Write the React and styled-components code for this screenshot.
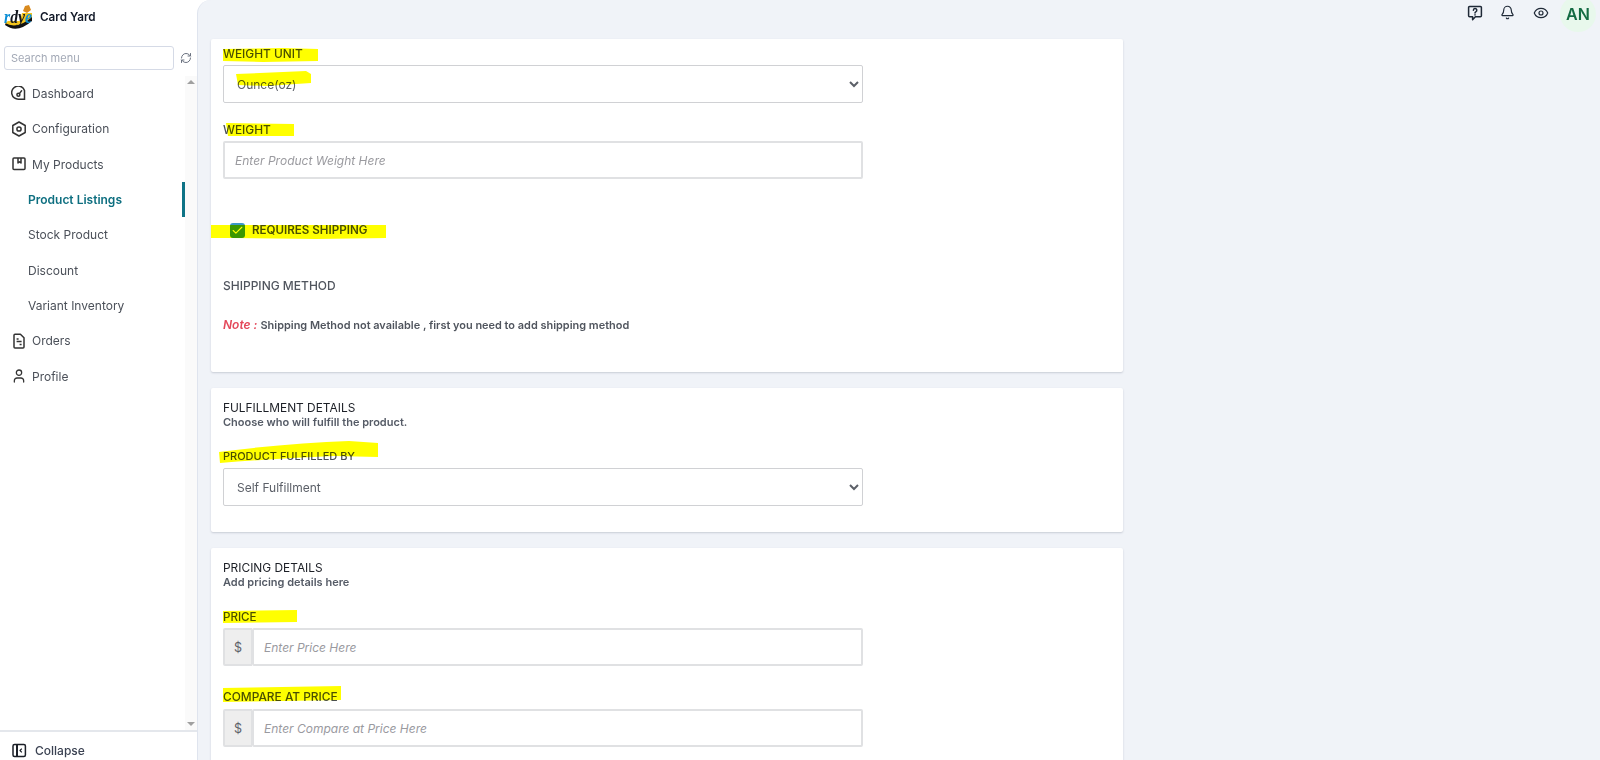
import React from 'react';
import styled, { createGlobalStyle } from 'styled-components';
import { RefreshCw, Check, Bell, Eye, User } from 'lucide-react';

const GlobalStyle = createGlobalStyle`
    html, body {
        margin: 0;
        height: 100%;
        overflow: hidden;
        background: #fff;
        font-family: Inter, "Liberation Sans", sans-serif;
    }
    * { box-sizing: border-box; }
`;

const Page = styled.div`
    display: flex;
    width: 1600px;
    height: 760px;
    overflow: hidden;
    background: #fff;
`;

const Sidebar = styled.aside`
    width: 197px;
    flex: none;
    display: flex;
    flex-direction: column;
    background: #fff;
`;

const Brand = styled.div`
    height: 34px;
    display: flex;
    align-items: center;
    gap: 7px;
    padding: 0 0 0 3px;
    font-size: 11.7px;
    font-weight: 600;
    color: #111827;
`;

const SearchRow = styled.div`
    display: flex;
    align-items: center;
    gap: 6px;
    padding: 12px 0 0 4px;
`;

const SearchInput = styled.input`
    width: 170px;
    height: 24px;
    border: 1px solid #d5dae6;
    border-radius: 3px;
    padding: 0 6px;
    font: 400 11px Inter, sans-serif;
    &::placeholder { color: #a3a9b6; opacity: 1; }
`;

const Refresh = styled(RefreshCw)`
    color: #6b7280;
`;

const MenuWrap = styled.div`
    flex: 1;
    min-height: 0;
    display: flex;
    margin-top: 6px;
`;

const Menu = styled.nav`
    flex: 1;
`;

const MenuRow = styled.div`
    position: relative;
    height: 35.3px;
    display: flex;
    align-items: center;
    gap: 5px;
    padding-left: ${p => (p.$sub ? '28px' : '11px')};
    font-size: 12px;
    font-weight: ${p => (p.$active ? 600 : 400)};
    color: ${p => (p.$active ? '#0e6f80' : '#4b5059')};
`;

const ActiveBar = styled.span`
    position: absolute;
    right: 0;
    top: 0;
    width: 3px;
    height: 100%;
    background: #0e7386;
`;

const ScrollTrack = styled.div`
    width: 12px;
    flex: none;
    display: flex;
    flex-direction: column;
    justify-content: space-between;
    align-items: center;
    padding: 4px 0;
    background: #fafafa;
`;

const Arrow = styled.span`
    width: 0;
    height: 0;
    border-left: 4px solid transparent;
    border-right: 4px solid transparent;
    border-${p => (p.$down ? 'top' : 'bottom')}: 4px solid #a0a0a0;
`;

const CollapseRow = styled.div`
    height: 30px;
    flex: none;
    border-top: 2px solid #e4e7ec;
    display: flex;
    align-items: center;
    gap: 8px;
    padding: 8px 0 0 12px;
    font-size: 12px;
    font-weight: 500;
    color: #3b4252;
`;

const Main = styled.main`
    flex: 1;
    min-width: 0;
    background: #f0f3f8;
    border-left: 1px solid #dfe4ee;
    border-top-left-radius: 14px;
    overflow: hidden;
`;

const TopBar = styled.header`
    height: 39px;
    position: relative;
    display: flex;
    justify-content: flex-end;
    align-items: flex-start;
    padding: 5px 4px 0 0;
    gap: 17px;
    color: #1f2937;
`;

const IconSlot = styled.span`
    display: flex;
    width: 16px;
    height: 16px;
    margin-right: ${p => p.$gap || 0}px;
`;

const Avatar = styled.div`
    position: absolute;
    right: 4px;
    top: -4px;
    width: 36px;
    height: 36px;
    border-radius: 50%;
    background: #e8f8ec;
    color: #146c43;
    font-size: 16px;
    font-weight: 600;
    display: flex;
    align-items: center;
    justify-content: center;
`;

const Content = styled.div`
    width: 912px;
    margin-left: 13px;
    display: flex;
    flex-direction: column;
    gap: 16px;
`;

const Card = styled.section`
    background: #fff;
    border-radius: 2px;
    box-shadow: 0 1px 2px rgba(60, 70, 90, 0.22);
    padding: ${p => p.$pad || '12px'} 12px ${p => p.$bottom || '26px'};
    min-height: ${p => p.$min || 0}px;
`;

const CardTitle = styled.div`
    font-size: 11.9px;
    line-height: 15px;
    color: #1c1f26;
`;

const CardSub = styled.div`
    font-size: 11px;
    line-height: 15px;
    font-weight: 600;
    color: #555b66;
`;

const Field = styled.div`
    position: relative;
    margin-top: ${p => p.$top || 0}px;
`;

const Label = styled.div`
    position: relative;
    font-size: ${p => p.$size || 11.6}px;
    line-height: 14px;
    font-weight: 500;
    color: #4a4f57;
    margin-bottom: ${p => p.$mb ?? 5}px;
`;

const fieldBox = `
    display: block;
    width: 640px;
    height: 38px;
    background: #fff;
    border: 2px solid #e0e1e3;
    border-radius: 2px;
    font-family: Inter, sans-serif;
    font-size: 12px;
    color: #5c6068;
    outline: none;
`;

const Select = styled.select`
    ${fieldBox}
    padding-left: 9px;
    border: 1.5px solid #d0d1d4;
`;

const TextInput = styled.input`
    ${fieldBox}
    padding-left: 10px;
    &::placeholder { color: #9a9a9f; font-style: italic; opacity: 1; }
`;

const InputGroup = styled.div`
    display: flex;
    width: 640px;
`;

const Addon = styled.span`
    width: 29px;
    height: 38px;
    flex: none;
    background: #eeeeee;
    border: 2px solid #e0e1e3;
    border-right-width: 1px;
    border-radius: 2px 0 0 2px;
    display: flex;
    align-items: center;
    justify-content: center;
    font-size: 12.5px;
    color: #5c6068;
`;

const GroupInput = styled(TextInput)`
    flex: 1;
    width: auto;
    min-width: 0;
`;

const CheckLine = styled.div`
    position: relative;
    display: flex;
    align-items: center;
    gap: 7px;
    margin-top: 43px;
    padding-left: 7px;
    height: 16px;
    font-size: 11.6px;
    font-weight: 600;
    color: #4a4f57;
`;

const CheckBox = styled.span`
    width: 15px;
    height: 15px;
    border-radius: 3px;
    background: #3c98c8;
    color: #fff;
    display: flex;
    align-items: center;
    justify-content: center;
`;

const SectionLabel = styled.div`
    margin-top: 40px;
    font-size: 12px;
    line-height: 16px;
    font-weight: 500;
    color: #50555e;
`;

const NoteLine = styled.div`
    margin-top: 23px;
    font-size: 10.95px;
    line-height: 16px;
    font-weight: 600;
    color: #50555e;
`;

const NoteTag = styled.em`
    font-size: 12px;
    font-weight: 600;
    color: #e4485a;
`;

const Marker = styled.svg`
    position: absolute;
    left: ${p => p.$x}px;
    top: ${p => p.$y}px;
    overflow: visible;
    pointer-events: none;
    mix-blend-mode: multiply;
    fill: #ffff00;
`;

const LogoText = styled.text`
    font-family: "Liberation Serif", serif;
    font-style: italic;
    font-weight: 700;
    font-size: 19px;
    fill: #14181f;
`;

const Logo = () => (
    <svg width="30" height="30" viewBox="0 0 30 30">
        <path d="M20 9 L22 4 L26 3 L28 8 L24 11 Z" fill="#d98a1e" />
        <path d="M2 23 Q14 32 29 19 L29 14 Q16 26 3 20 Z" fill="#111" />
        <path d="M2 21 Q14 28 29 15 L29 11 L19 11 L17 19 L5 19 Z" fill="#f4c51c" />
        <LogoText x="1" y="21" textLength="28" lengthAdjust="spacingAndGlyphs">
            <tspan fill="#0e8fd6">r</tspan>dy<tspan fill="#0e8fd6">e</tspan>
        </LogoText>
    </svg>
);

const GaugeIcon = () => (
    <svg width="16" height="16" viewBox="0 0 16 16" fill="none" stroke="#333" strokeWidth="1.5" strokeLinecap="round">
        <path d="M13.5 4.4V13.2H8a6.6 6.6 0 1 1 5.5-8.8Z" />
        <circle cx="7.4" cy="8.8" r="1.5" />
        <path d="M8.4 7.6 10.6 4.8" />
    </svg>
);

const HexIcon = () => (
    <svg width="16" height="16" viewBox="0 0 16 16" fill="none" stroke="#333" strokeWidth="1.5" strokeLinejoin="round">
        <path d="M8 1 14.2 4.5v7L8 15 1.8 11.5v-7Z" />
        <circle cx="8" cy="8" r="2.1" />
    </svg>
);

const ProductIcon = () => (
    <svg width="16" height="16" viewBox="0 0 16 16" fill="none" stroke="#333" strokeWidth="1.5" strokeLinejoin="round">
        <rect x="2" y="2" width="12" height="11.6" rx="1" />
        <path d="M7 2v5l1.6-1.2L10 7V2" />
    </svg>
);

const OrderIcon = () => (
    <svg width="16" height="16" viewBox="0 0 16 16" fill="none" stroke="#333" strokeWidth="1.5" strokeLinejoin="round">
        <path d="M3 2.2a1 1 0 0 1 1-1h5.4L13 4.8V14a1 1 0 0 1-1 1H4a1 1 0 0 1-1-1Z" />
        <path d="M5.6 6h2M5.6 8.6h5M8.6 11.4h2" />
    </svg>
);

const CollapseIcon = () => (
    <svg width="15" height="15" viewBox="0 0 15 15" fill="none" stroke="#1b1f27" strokeWidth="1.5" strokeLinejoin="round">
        <rect x="1" y="1.5" width="12.4" height="12" rx="1.5" />
        <path d="M5 1.5v12" strokeWidth="2" />
        <path d="M9.8 5.7 8 7.5l1.8 1.8" strokeWidth="1.2" />
    </svg>
);

const HelpIcon = () => (
    <svg width="16" height="16" viewBox="0 0 16 16" fill="none" stroke="#1f2937" strokeWidth="1.5" strokeLinejoin="round" strokeLinecap="round">
        <path d="M2.6 1.6h10.8a1 1 0 0 1 1 1v8.2a1 1 0 0 1-1 1H8.4L5.6 14.6v-2.8H2.6a1 1 0 0 1-1-1V2.6a1 1 0 0 1 1-1Z" />
        <path d="M6.4 5.2a1.7 1.7 0 1 1 2.4 1.6c-.6.3-.8.6-.8 1.2M8 9.8v.1" />
    </svg>
);

const menuTop = [
    { label: 'Dashboard', icon: <GaugeIcon /> },
    { label: 'Configuration', icon: <HexIcon /> },
    { label: 'My Products', icon: <ProductIcon /> },
];

const subMenu = ['Product Listings', 'Stock Product', 'Discount', 'Variant Inventory'];

const menuBottom = [
    { label: 'Orders', icon: <OrderIcon /> },
    { label: 'Profile', icon: <User size={16} color="#333" strokeWidth={1.9} /> },
];

const App = () => {
    return (
        <Page>
            <GlobalStyle />
            <Sidebar>
                <Brand>
                    <Logo />
                    Card Yard
                </Brand>
                <SearchRow>
                    <SearchInput placeholder="Search menu" />
                    <Refresh size={12} strokeWidth={2} />
                </SearchRow>
                <MenuWrap>
                    <Menu>
                        {menuTop.map(item => (
                            <MenuRow key={item.label}>
                                {item.icon}
                                {item.label}
                            </MenuRow>
                        ))}
                        {subMenu.map((label, i) => (
                            <MenuRow key={label} $sub $active={i === 0}>
                                {label}
                                {i === 0 && <ActiveBar />}
                            </MenuRow>
                        ))}
                        {menuBottom.map(item => (
                            <MenuRow key={item.label}>
                                {item.icon}
                                {item.label}
                            </MenuRow>
                        ))}
                    </Menu>
                    <ScrollTrack>
                        <Arrow />
                        <Arrow $down />
                    </ScrollTrack>
                </MenuWrap>
                <CollapseRow>
                    <CollapseIcon />
                    Collapse
                </CollapseRow>
            </Sidebar>
            <Main>
                <TopBar>
                    <IconSlot><HelpIcon /></IconSlot>
                    <IconSlot><Bell size={15} strokeWidth={1.9} /></IconSlot>
                    <IconSlot $gap={47}><Eye size={16} strokeWidth={1.8} /></IconSlot>
                    <Avatar>AN</Avatar>
                </TopBar>
                <Content>
                    <Card $pad="8px" $bottom="0" $min={333}>
                        <Field>
                            <Label $size={11.9} $mb={4}>
                                WEIGHT UNIT
                                <Marker $x={0} $y={1} width="95" height="14">
                                    <path d="M0 1 L60 0 L95 1 L95 13 L40 14 L0 13 Z" />
                                </Marker>
                            </Label>
                            <Select defaultValue="oz">
                                <option value="oz">Ounce(oz)</option>
                            </Select>
                            <Marker $x={13} $y={24} width="75" height="15">
                                <path d="M0 3 L70 0 L75 3 L75 12 L30 15 L2 14 Z" />
                            </Marker>
                        </Field>
                        <Field $top={20}>
                            <Label $size={11.9} $mb={4}>
                                WEIGHT
                                <Marker $x={3} $y={0} width="68" height="13">
                                    <path d="M0 0 L68 1 L68 13 L2 13 Z" />
                                </Marker>
                            </Label>
                            <TextInput placeholder="Enter Product Weight Here" />
                        </Field>
                        <CheckLine>
                            <CheckBox><Check size={13} strokeWidth={2} /></CheckBox>
                            REQUIRES SHIPPING
                            <Marker $x={-12} $y={2} width="175" height="15">
                                <path d="M0 1 L175 1 L175 14 L105 15 L20 14 L0 14 Z" />
                            </Marker>
                        </CheckLine>
                        <SectionLabel>SHIPPING METHOD</SectionLabel>
                        <NoteLine>
                            <NoteTag>Note : </NoteTag>
                            Shipping Method not available , first you need to add shipping method
                        </NoteLine>
                    </Card>
                    <Card $min={144}>
                        <CardTitle>FULFILLMENT DETAILS</CardTitle>
                        <CardSub>Choose who will fulfill the product.</CardSub>
                        <Field $top={19}>
                            <Label $size={11}>
                                PRODUCT FULFILLED BY
                                <Marker $x={-4} $y={-8} width="159" height="22">
                                    <path d="M0 11 Q70 2 130 0 L159 2 L159 16 L115 15 Q50 18 1 22 Z" />
                                </Marker>
                            </Label>
                            <Select defaultValue="self">
                                <option value="self">Self Fulfillment</option>
                            </Select>
                        </Field>
                    </Card>
                    <Card $min={300}>
                        <CardTitle>PRICING DETAILS</CardTitle>
                        <CardSub>Add pricing details here</CardSub>
                        <Field $top={20}>
                            <Label $mb={4}>
                                PRICE
                                <Marker $x={0} $y={0} width="74" height="13">
                                    <path d="M0 1 L74 0 L74 12 L0 13 Z" />
                                </Marker>
                            </Label>
                            <InputGroup>
                                <Addon>$</Addon>
                                <GroupInput placeholder="Enter Price Here" />
                            </InputGroup>
                        </Field>
                        <Field $top={24}>
                            <Label $size={11.9} $mb={5}>
                                COMPARE AT PRICE
                                <Marker $x={0} $y={-4} width="118" height="16">
                                    <path d="M0 2 L118 0 L118 14 L0 16 Z" />
                                </Marker>
                            </Label>
                            <InputGroup>
                                <Addon>$</Addon>
                                <GroupInput placeholder="Enter Compare at Price Here" />
                            </InputGroup>
                        </Field>
                    </Card>
                </Content>
            </Main>
        </Page>
    );
};

export default App;
